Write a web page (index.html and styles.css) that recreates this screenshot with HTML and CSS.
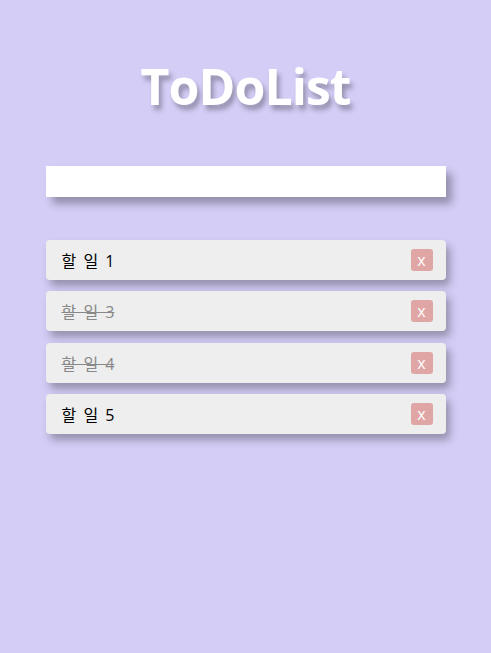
FILE: index.html
```html
<!DOCTYPE html>
<html lang="ko">
<head>
<meta charset="utf-8">
<title>ToDoList</title>
<link rel="stylesheet" href="styles.css">
</head>
<body>
<div class="app">
  <h1 class="title">ToDoList</h1>
  <input class="new-todo" type="text">
  <ul class="list">
    <li class="item"><span class="text">할 일 1</span><button class="del">x</button></li>
    <li class="item done"><span class="text">할 일 3</span><button class="del">x</button></li>
    <li class="item done"><span class="text">할 일 4</span><button class="del">x</button></li>
    <li class="item"><span class="text">할 일 5</span><button class="del">x</button></li>
  </ul>
</div>
</body>
</html>
```
FILE: styles.css
```css
html, body {
  margin: 0;
  padding: 0;
}
body {
  background: #d4cef7;
  font-family: "Open Sans", "Noto Sans CJK KR", sans-serif;
  min-height: 653px;
}
.app {
  width: 400px;
  margin: 0 auto;
  padding-top: 50px;
  display: flex;
  flex-direction: column;
}
.title {
  margin: 0;
  text-align: center;
  color: #fff;
  font-size: 50px;
  font-weight: 700;
  line-height: 72px;
  letter-spacing: -1px;
  text-shadow: 3px 5px 5px rgba(0, 0, 0, 0.3);
}
.new-todo {
  margin-top: 44px;
  height: 31px;
  box-sizing: border-box;
  border: none;
  outline: none;
  background: #fff;
  box-shadow: 6px 7px 8px rgba(0, 0, 0, 0.3);
  padding: 0 10px;
  font-size: 16px;
}
.list {
  list-style: none;
  margin: 43px 0 0;
  padding: 0;
  display: flex;
  flex-direction: column;
  gap: 11.3px;
}
.item {
  height: 40px;
  box-sizing: border-box;
  background: #eeeeee;
  border-radius: 4px;
  box-shadow: 4px 6px 8px rgba(0, 0, 0, 0.3);
  display: flex;
  align-items: center;
  justify-content: space-between;
  padding: 0 13px 0 16px;
}
.text {
  font-size: 16px;
  color: #000;
  word-spacing: 3px;
}
.done .text {
  color: #888;
  text-decoration: line-through;
}
.del {
  width: 22px;
  height: 22px;
  border: none;
  border-radius: 3px;
  background: #e0a6a6;
  color: #fff;
  font-family: "Open Sans", sans-serif;
  font-size: 16px;
  line-height: 20px;
  padding: 0;
  cursor: pointer;
}
```
